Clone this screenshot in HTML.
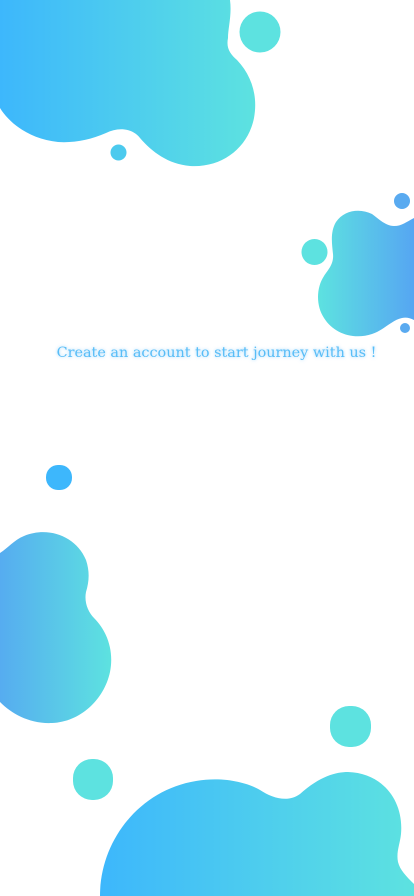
<!DOCTYPE html>
<html><head><meta charset="utf-8"><style>
html,body{margin:0;padding:0;background:#fff;width:414px;height:896px;overflow:hidden;position:relative}
svg{position:absolute;left:0;top:0}
.t{position:absolute;left:0;width:433px;top:345px;text-align:center;font-family:"DejaVu Serif","Liberation Serif",serif;font-size:14.4px;color:#58bdf7;text-shadow:0 0 3px rgba(80,180,250,.6);white-space:nowrap}
</style></head><body>
<svg width="414" height="896" viewBox="0 0 414 896">
<defs>
<linearGradient id="g1" x1="0" x2="1" y1="0" y2="0"><stop offset="0" stop-color="#3db7fc"/><stop offset="1" stop-color="#5de2e0"/></linearGradient>
<linearGradient id="g2" x1="0" x2="1" y1="0" y2="0"><stop offset="0" stop-color="#5de2e0"/><stop offset="1" stop-color="#56a6f2"/></linearGradient>
<linearGradient id="g3" x1="0" x2="1" y1="0" y2="0"><stop offset="0" stop-color="#56acf0"/><stop offset="1" stop-color="#5de2e0"/></linearGradient>
</defs>
<path fill="url(#g1)" d="M0,0 L230,0 C232,15 228,28 228,38 C226,48 230,54 237,60 C252,76 258,96 254,118 C248,148 222,168 190,166 C168,164 152,152 140,138 C132,128 118,127 106,133 C90,140 74,143 58,142 C30,139 10,124 0,108 Z"/>
<circle cx="260" cy="32" r="20.5" fill="#5de2e0"/>
<circle cx="118.5" cy="152.5" r="8" fill="#4ccaee"/>
<path fill="url(#g2)" d="M414,218 C406,222 402,226 394,226 C386,226 380,220 372,214 C360,208 344,210 336,222 C330,232 332,244 333,254 C334,264 328,270 324,276 C316,288 316,306 324,318 C334,334 354,340 372,334 C384,330 392,320 402,318 C406,317 410,318 414,320 Z"/>
<circle cx="314.5" cy="252" r="13" fill="#5de2e0"/>
<circle cx="402" cy="201" r="8" fill="#59aaf0"/>
<circle cx="405" cy="328" r="5" fill="#59aaf0"/>
<path fill="url(#g3)" d="M0,553 C8,548 14,540 24,536 C48,526 76,536 86,560 C90,572 89,582 86,592 C84,602 88,612 94,618 C108,632 114,652 110,672 C104,700 80,722 52,723 C30,724 12,714 0,702 Z"/>
<rect x="46" y="465" width="26" height="25" rx="12" fill="#3db7fc"/>
<rect x="330" y="706" width="41" height="41" rx="19" fill="#5de2e0"/>
<rect x="73" y="759" width="40" height="41" rx="19" fill="#5de2e0"/>
<path fill="url(#g1)" d="M100,896 C100,840 140,790 196,781 C226,776 250,784 260,790 C272,798 288,803 300,794 C320,776 336,772 348,772 C382,773 404,800 401,834 C400,844 396,852 398,862 C400,870 406,876 414,884 L414,896 Z"/>
</svg>
<div class="t">Create an account to start journey with us !</div>
</body></html>
